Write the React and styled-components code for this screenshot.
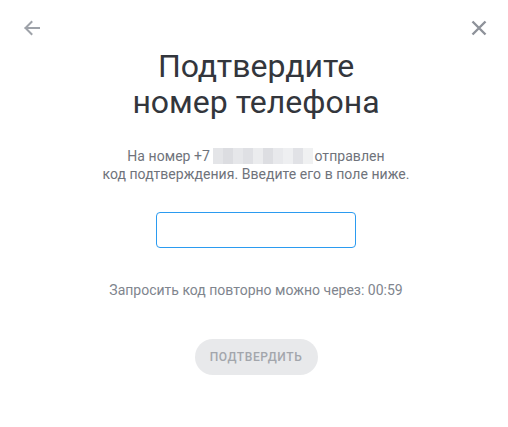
import React from 'react';
import styled, { createGlobalStyle } from 'styled-components';

const GlobalStyle = createGlobalStyle`
  html, body {
    margin: 0;
    padding: 0;
    background: #fff;
  }
  body {
    font-family: Roboto, "Liberation Sans", sans-serif;
  }
`;

const blurShades = ['#e4e5e8', '#dcdde1', '#e6e7ea', '#dfe0e4', '#ebecee', '#dddee2', '#e8e9ec', '#eeeff1', '#e1e2e6', '#f0f1f2'];

const Page = () => (
  <Wrapper>
    <GlobalStyle />
    <TopBar>
      <IconButton aria-label='Назад'>
        <svg width='18' height='18' viewBox='0 0 18 18' fill='none'>
          <path d='M17.5 9H3.5M9.5 3L3.5 9l6 6' stroke='#9ea2a9' strokeWidth='2' strokeLinecap='square' />
        </svg>
      </IconButton>
      <IconButton aria-label='Закрыть'>
        <svg width='16' height='16' viewBox='0 0 16 16' fill='none'>
          <path d='M1.5 1.5l13 13M14.5 1.5l-13 13' stroke='#8e929a' strokeWidth='2.4' />
        </svg>
      </IconButton>
    </TopBar>

    <Title>
      Подтвердите
      <br />
      номер телефона
    </Title>

    <Description>
      На номер +7{' '}
      <Blurred>
        {blurShades.map((shade, i) => (
          <BlurCell key={i} style={{ background: shade }} />
        ))}
      </Blurred>
      отправлен
      <br />
      код подтверждения. Введите его в поле ниже.
    </Description>

    <CodeInput autoFocus />

    <Timer>Запросить код повторно можно через: 00:59</Timer>

    <SubmitButton disabled>Подтвердить</SubmitButton>
  </Wrapper>
);

const Wrapper = styled.div`
  width: 508px;
  height: 427px;
  display: flex;
  flex-direction: column;
  align-items: center;
  box-sizing: border-box;
  padding: 18px 20px 0 24px;
`;

const TopBar = styled.div`
  align-self: stretch;
  margin: 0 -2px 0 -4px;
  display: flex;
  justify-content: space-between;
  align-items: center;
  height: 20px;
`;

const IconButton = styled.button`
  border: 0;
  background: none;
  padding: 0;
  width: 22px;
  height: 20px;
  display: flex;
  align-items: center;
  justify-content: center;
  cursor: pointer;
`;

const Title = styled.h1`
  margin: 10px 0 0;
  font-size: 32px;
  line-height: 36px;
  font-weight: 400;
  color: #33363c;
  text-align: center;
`;

const Description = styled.p`
  margin: 27px 0 0;
  font-size: 14px;
  line-height: 18px;
  letter-spacing: 0.05px;
  color: #6f737b;
  text-align: center;
`;

const Blurred = styled.span`
  display: inline-flex;
  vertical-align: -3px;
  width: 100px;
  height: 16px;
  margin-right: 1px;
`;

const BlurCell = styled.span`
  flex: 1;
  height: 100%;
`;

const CodeInput = styled.input`
  margin-top: 29px;
  width: 200px;
  height: 36px;
  box-sizing: border-box;
  border: 1px solid #2b9bf0;
  border-radius: 4px;
  outline: none;
  font-size: 18px;
  text-align: center;
`;

const Timer = styled.p`
  margin: 33px 0 0;
  font-size: 14px;
  line-height: 18px;
  color: #80858e;
`;

const SubmitButton = styled.button`
  margin-top: 40px;
  width: 123px;
  height: 36px;
  border: 0;
  border-radius: 18px;
  background: #e8e9eb;
  color: #a3a6ac;
  font-family: Roboto, "Liberation Sans", sans-serif;
  font-size: 12px;
  font-weight: 500;
  letter-spacing: 0.6px;
  text-transform: uppercase;
`;

export default Page;
